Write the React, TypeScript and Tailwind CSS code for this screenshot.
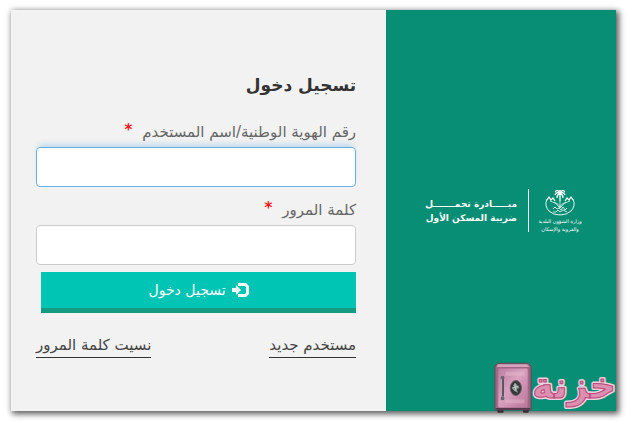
import React from 'react';

function LoginIcon() {
  return (
    <svg viewBox="0 0 17 14" className="h-[14px] w-[17px]" fill="currentColor" aria-hidden="true">
      <path d="M6 0h8l3 3v8l-3 3H6v-3h7l1-1V4l-1-1H6z" />
      <path d="M0 5h4V2l5 5-5 5V9H0z" />
    </svg>
  );
}

function PalmEmblem() {
  return (
    <svg viewBox="0 0 32 28" className="h-7 w-8" fill="none" stroke="white" aria-hidden="true">
      <path d="M16 12V5M16 5q-3-3-5 1M16 5q3-3 5 1M16 4q-2-4-5-1M16 4q2-4 5-1M16 4V1M16 5q-3 0-3 4M16 5q3 0 3 4" strokeWidth="1.3" />
      <path d="M3 10Q0 17 5 22q4 4 11 4t11-4q5-5 2-12" strokeWidth="0.9" />
      <path d="M3 11l2-3 2 3 2-2 2 3M29 11l-2-3-2 3-2-2-2 3" strokeWidth="1.2" />
      <path d="M6 12q6 1 10 7 4-6 10-7M10 13q5 2 6 5 1-3 6-5M16 12v7" strokeWidth="0.7" />
      <path d="M9 20l2-2 2 2 2-1 2 2 2-3 2 3 2-2M9 23h3l2-2 2 2 3-2 4 2" strokeWidth="0.8" />
    </svg>
  );
}

function Safe() {
  return (
    <svg viewBox="0 0 40 54" className="h-[54px] w-[38px]" aria-hidden="true">
      <defs>
        <linearGradient id="door" x2="1" y2="1">
          <stop stopColor="#bd7b9f" />
          <stop offset="0.45" stopColor="#d9a1bf" />
          <stop offset="1" stopColor="#b77598" />
        </linearGradient>
      </defs>
      <path d="M3 50h7v3H4zM30 50h7l-1 3h-5z" fill="#382c35" />
      <path d="M4 1h32l3 3v46H1V4z" fill="#9d6682" stroke="#654457" />
      <path d="M4 2h31l2 3H3z" fill="#d1a4bb" />
      <rect x="4" y="6" width="32" height="42" rx="2" fill="url(#door)" stroke="#a56887" />
      <path d="M12 12h20M12 41h20" stroke="#e8bbd1" strokeWidth="4" opacity="0.45" />
      <path d="M9 16v20" stroke="#59535c" strokeWidth="3" />
      <path d="M8 16v20" stroke="#c1b6bf" />
      <circle cx="9" cy="16" r="2" fill="#6d6570" />
      <circle cx="9" cy="38" r="2" fill="#6d6570" />
      <ellipse cx="23" cy="27" rx="6" ry="8" fill="#343a3a" stroke="#77636e" />
      <path d="M20 24l3-2 2 3 2 2-3 1 1 4-4-2-2-3 2-1z" fill="#8f9b97" />
      <path d="M22 22l1 8M19 27l7-2" stroke="#c5cbc7" />
      <path d="M2 49h36" stroke="#55394b" strokeWidth="2" />
    </svg>
  );
}

function Watermark() {
  return (
    <div className="absolute right-0 -bottom-1 flex items-end" dir="ltr">
      <Safe />
      <svg viewBox="0 0 84 56" className="h-14 w-[84px]" role="img" aria-label="خزنة">
        <g fontFamily="DejaVu Sans, sans-serif" fontWeight="bold" fontSize="36" textAnchor="middle" direction="rtl">
          <text x="42" y="39" fill="#c9638f" stroke="#efd0df" strokeWidth="4" strokeLinejoin="round" paintOrder="stroke">خزنة</text>
          <text x="42" y="39" fill="#dc8fb0" stroke="#b84c7c" strokeWidth="1">خزنة</text>
        </g>
      </svg>
    </div>
  );
}

function Field({ id, label, type, className }: { id: string; label: string; type: string; className: string }) {
  return (
    <div className="flex flex-col">
      <label htmlFor={id} className="flex h-[30px] items-center gap-[10px] text-[15px] text-[#666]">
        {label}
        <span className="mb-1 text-[15px] leading-none font-bold text-[#ed1c24]">*</span>
      </label>
      <input id={id} type={type} className={`h-10 w-full rounded border bg-white px-3 text-sm outline-none ${className}`} />
    </div>
  );
}

export default function App() {
  return (
    <main dir="rtl" className="bg-white px-[11px] pt-[10px] pb-[11px] font-['DejaVu_Sans',sans-serif]">
      <div className="relative flex w-full shadow-[2px_2px_6px_1px_rgba(0,0,0,0.65)]">
        <aside className="flex w-[38%] shrink-0 items-center gap-[11px] bg-[#078e75] pr-9 text-white">
          <div className="flex w-10 flex-col items-center">
            <PalmEmblem />
            <p className="text-center text-[5px] leading-[8px] whitespace-nowrap">وزارة الشؤون البلدية<br />والقروية والإسكان</p>
          </div>
          <div className="h-[43px] w-px bg-white" />
          <p className="text-[9px] leading-[14px] font-bold whitespace-nowrap">مبـــــادرة تحمـــــــل<br />ضريبة المسكن الأول</p>
        </aside>
        <form className="flex min-w-0 flex-1 flex-col bg-[#f2f2f2] pt-[60px] pr-[30px] pb-[53px] pl-[25px]" onSubmit={(e) => e.preventDefault()}>
          <h1 className="mb-[17px] text-[17px] leading-[30px] font-bold text-[#333]">تسجيل دخول</h1>
          <div className="flex flex-col gap-2">
            <Field id="user" label="رقم الهوية الوطنية/اسم المستخدم" type="text" className="border-[#66afe9] shadow-[0_-5px_6px_-3px_rgba(102,175,233,0.45)]" />
            <Field id="password" label="كلمة المرور" type="password" className="border-[#ccc]" />
          </div>
          <button type="submit" className="mt-[7px] ml-[5px] flex h-[41px] items-center justify-center gap-[6px] border-b-[5px] border-[#149b82] bg-[#00c5b5] text-sm text-white">
            <LoginIcon />
            تسجيل دخول
          </button>
          <nav className="mt-5 flex items-center justify-between text-[15px] leading-6 text-[#444]">
            <a href="#register" className="border-b border-[#333]">مستخدم جديد</a>
            <a href="#forgot" className="border-b border-[#333]">نسيت كلمة المرور</a>
          </nav>
        </form>
        <Watermark />
      </div>
    </main>
  );
}
